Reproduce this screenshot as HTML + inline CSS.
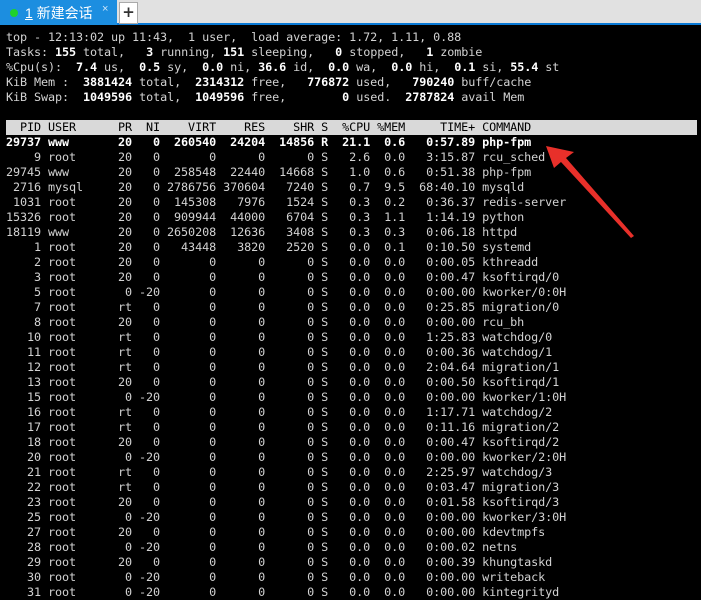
<!DOCTYPE html>
<html><head><meta charset="utf-8"><style>
html,body{margin:0;padding:0;background:#000;width:701px;height:593px;overflow:hidden}
.bar{position:absolute;left:0;top:0;width:701px;height:23px;background:#e1e1e1}
.line{position:absolute;left:0;top:23px;width:701px;height:2px;background:#0a7ad6}
.tab{position:absolute;left:0;top:0;width:117px;height:25px;background:#1c8ee0;color:#fff;font:14px "Liberation Sans","Noto Sans CJK SC",sans-serif}
.dot{position:absolute;left:10px;top:9px;width:8px;height:8px;border-radius:50%;background:#1fd12d}
.tl{position:absolute;left:25px;top:3px}
.tl u{text-decoration:underline}
.x{position:absolute;left:102px;top:3px;font-size:11px;color:#cfe6fa}
.plus{position:absolute;left:119px;top:2px;width:17px;height:20px;background:#fff;border:1px solid #aaa;font:bold 15px "DejaVu Sans",sans-serif;text-align:center;line-height:19px;color:#333}
pre{position:absolute;left:6px;top:30px;margin:0;font:11.8px/15px "DejaVu Sans Mono","Liberation Mono",monospace;letter-spacing:-0.1px;color:#d2d2d2}
b{color:#fff;font-weight:bold}
.hd{background:#d9d9d9;color:#000;display:inline-block;width:691px}
</style></head><body>
<div class="bar"></div><div class="line"></div>
<div class="tab"><div class="dot"></div><div class="tl"><u>1</u> 新建会话</div><div class="x">×</div></div>
<div class="plus">+</div>
<pre>top - 12:13:02 up 11:43,  1 user,  load average: 1.72, 1.11, 0.88
Tasks: <b>155</b> total,   <b>3</b> running, <b>151</b> sleeping,   <b>0</b> stopped,   <b>1</b> zombie
%Cpu(s):  <b>7.4</b> us,  <b>0.5</b> sy,  <b>0.0</b> ni, <b>36.6</b> id,  <b>0.0</b> wa,  <b>0.0</b> hi,  <b>0.1</b> si, <b>55.4</b> st
KiB Mem :  <b>3881424</b> total,  <b>2314312</b> free,   <b>776872</b> used,   <b>790240</b> buff/cache
KiB Swap:  <b>1049596</b> total,  <b>1049596</b> free,        <b>0</b> used.  <b>2787824</b> avail Mem

<span class="hd">  PID USER      PR  NI    VIRT    RES    SHR S  %CPU %MEM     TIME+ COMMAND</span>
<b>29737 www       20   0  260540  24204  14856 R  21.1  0.6   0:57.89 php-fpm</b>
    9 root      20   0       0      0      0 S   2.6  0.0   3:15.87 rcu_sched
29745 www       20   0  258548  22440  14668 S   1.0  0.6   0:51.38 php-fpm
 2716 mysql     20   0 2786756 370604   7240 S   0.7  9.5  68:40.10 mysqld
 1031 root      20   0  145308   7976   1524 S   0.3  0.2   0:36.37 redis-server
15326 root      20   0  909944  44000   6704 S   0.3  1.1   1:14.19 python
18119 www       20   0 2650208  12636   3408 S   0.3  0.3   0:06.18 httpd
    1 root      20   0   43448   3820   2520 S   0.0  0.1   0:10.50 systemd
    2 root      20   0       0      0      0 S   0.0  0.0   0:00.05 kthreadd
    3 root      20   0       0      0      0 S   0.0  0.0   0:00.47 ksoftirqd/0
    5 root       0 -20       0      0      0 S   0.0  0.0   0:00.00 kworker/0:0H
    7 root      rt   0       0      0      0 S   0.0  0.0   0:25.85 migration/0
    8 root      20   0       0      0      0 S   0.0  0.0   0:00.00 rcu_bh
   10 root      rt   0       0      0      0 S   0.0  0.0   1:25.83 watchdog/0
   11 root      rt   0       0      0      0 S   0.0  0.0   0:00.36 watchdog/1
   12 root      rt   0       0      0      0 S   0.0  0.0   2:04.64 migration/1
   13 root      20   0       0      0      0 S   0.0  0.0   0:00.50 ksoftirqd/1
   15 root       0 -20       0      0      0 S   0.0  0.0   0:00.00 kworker/1:0H
   16 root      rt   0       0      0      0 S   0.0  0.0   1:17.71 watchdog/2
   17 root      rt   0       0      0      0 S   0.0  0.0   0:11.16 migration/2
   18 root      20   0       0      0      0 S   0.0  0.0   0:00.47 ksoftirqd/2
   20 root       0 -20       0      0      0 S   0.0  0.0   0:00.00 kworker/2:0H
   21 root      rt   0       0      0      0 S   0.0  0.0   2:25.97 watchdog/3
   22 root      rt   0       0      0      0 S   0.0  0.0   0:03.47 migration/3
   23 root      20   0       0      0      0 S   0.0  0.0   0:01.58 ksoftirqd/3
   25 root       0 -20       0      0      0 S   0.0  0.0   0:00.00 kworker/3:0H
   27 root      20   0       0      0      0 S   0.0  0.0   0:00.00 kdevtmpfs
   28 root       0 -20       0      0      0 S   0.0  0.0   0:00.02 netns
   29 root      20   0       0      0      0 S   0.0  0.0   0:00.39 khungtaskd
   30 root       0 -20       0      0      0 S   0.0  0.0   0:00.00 writeback
   31 root       0 -20       0      0      0 S   0.0  0.0   0:00.00 kintegrityd</pre>
<svg style="position:absolute;left:0;top:0" width="701" height="593">
<polygon points="546,146 574,152 566,158 634,236 631,238 561,162 554,168" fill="#e8302a"/>
</svg>
</body></html>
